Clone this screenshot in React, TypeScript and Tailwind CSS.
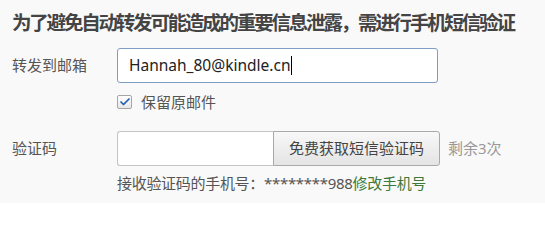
import { Check } from "lucide-react";

const cn = '"Noto Sans", "Noto Sans CJK SC", sans-serif';

export default function App() {
  return (
    <div
      className="w-[545px] h-[203px] bg-[#f9f9f9] pl-[12px] pt-[9px] text-[#555] overflow-hidden"
      style={{ fontFamily: cn }}
    >
      <h1 className="text-[19.5px] leading-[28px] font-bold tracking-[-2.2px] text-[#444] whitespace-nowrap">
        为了避免自动转发可能造成的重要信息泄露，需进行手机短信验证
      </h1>

      <div className="mt-[11px] flex items-center">
        <label className="w-[105px] text-[15px] text-[#555]">转发到邮箱</label>
        <div className="w-[321px] h-[35px] rounded-[3px] border border-[#7f9cc2] bg-white flex items-center pl-[11px] text-[15.5px] text-[#222]">
          Hannah_80@kindle.cn
          <span className="ml-[1px] w-px h-[19px] bg-black" />
        </div>
      </div>

      <div className="mt-[8px] ml-[105px] flex items-center gap-[9px]">
        <span className="w-[15px] h-[14px] rounded-[2px] border border-[#a5a5a5] bg-gradient-to-b from-white to-[#e8e8e8] flex items-center justify-center">
          <Check className="w-[12px] h-[12px] text-[#1f5fb4]" strokeWidth={3.5} />
        </span>
        <span className="text-[15px] text-[#555]">保留原邮件</span>
      </div>

      <div className="mt-[17px] flex items-center">
        <label className="w-[105px] text-[15px] text-[#555]">验证码</label>
        <div className="flex h-[35px]">
          <div className="w-[156px] h-full rounded-l-[3px] border border-[#c4c4c4] border-r-0 bg-white" />
          <button className="w-[167px] h-full rounded-r-[3px] border border-[#a9a9a9] bg-gradient-to-b from-[#f8f8f8] to-[#e4e4e4] text-[15px] text-[#444]">
            免费获取短信验证码
          </button>
        </div>
        <span className="ml-[8px] text-[15px] text-[#999]">剩余3次</span>
      </div>

      <div className="mt-[6px] ml-[105px] text-[15px] leading-[22px] tracking-[-0.3px] text-[#555]">
        接收验证码的手机号：********988
        <a className="text-[#3c7a3c]">修改手机号</a>
      </div>
    </div>
  );
}
